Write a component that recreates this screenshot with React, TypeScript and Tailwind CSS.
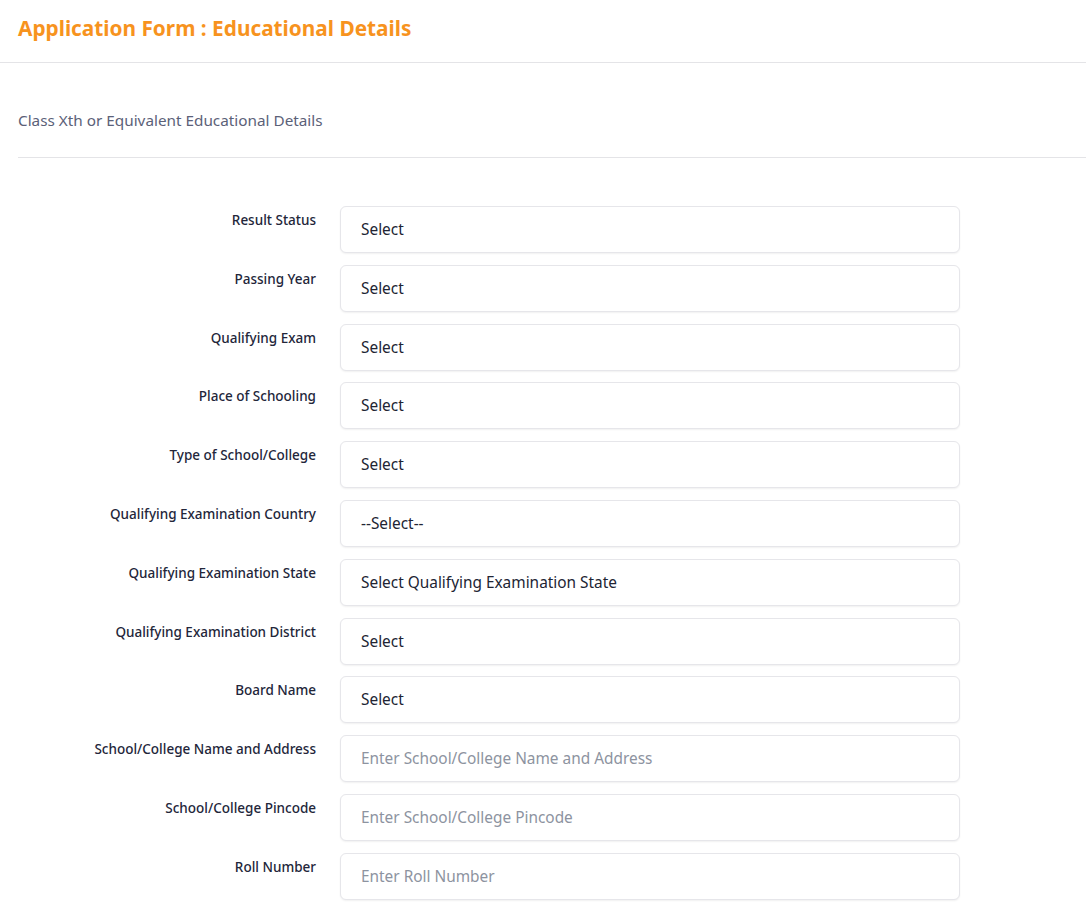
import React from "react";

interface Field {
  label: string;
  value?: string;
  placeholder?: string;
}

const fields: Field[] = [
  { label: "Result Status", value: "Select" },
  { label: "Passing Year", value: "Select" },
  { label: "Qualifying Exam", value: "Select" },
  { label: "Place of Schooling", value: "Select" },
  { label: "Type of School/College", value: "Select" },
  { label: "Qualifying Examination Country", value: "--Select--" },
  { label: "Qualifying Examination State", value: "Select Qualifying Examination State" },
  { label: "Qualifying Examination District", value: "Select" },
  { label: "Board Name", value: "Select" },
  { label: "School/College Name and Address", placeholder: "Enter School/College Name and Address" },
  { label: "School/College Pincode", placeholder: "Enter School/College Pincode" },
  { label: "Roll Number", placeholder: "Enter Roll Number" },
];

const FieldRow: React.FC<{ field: Field }> = ({ field }) => {
  return (
    <div className="flex">
      <label className="w-[316px] shrink-0 pt-[5px] text-right text-[13.5px] leading-[18px] font-medium text-[#23263a]">
        {field.label}
      </label>
      <div className="ml-6 flex h-[47px] w-[620px] items-center rounded-md border border-[#e6e6ea] bg-white px-5 shadow-[0_1px_2px_rgba(0,0,0,0.06)]">
        {field.value ? (
          <span className="text-[15.4px] text-[#212433]">{field.value}</span>
        ) : (
          <span className="text-[15.4px] text-[#8d93a0]">{field.placeholder}</span>
        )}
      </div>
    </div>
  );
};

export default function App() {
  return (
    <div className="min-h-screen bg-white font-['Noto_Sans',sans-serif]">
      <div className="flex h-[63px] items-center border-b border-[#e4e4e7] px-[18px]">
        <h1 className="pb-[4px] text-[20.8px] font-bold text-[#f7931e]">
          Application Form : Educational Details
        </h1>
      </div>
      <div className="ml-[18px] border-b border-[#e4e4e7] pt-[47px] pb-[27px]">
        <p className="text-[15.3px] leading-5 text-[#5b6178]">
          Class Xth or Equivalent Educational Details
        </p>
      </div>
      <div className="flex flex-col gap-[11.8px] pt-[48px] pb-6">
        {fields.map((f) => (
          <FieldRow key={f.label} field={f} />
        ))}
      </div>
    </div>
  );
}
